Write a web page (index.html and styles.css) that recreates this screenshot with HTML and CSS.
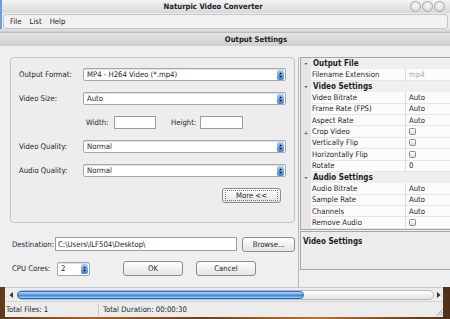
FILE: index.html
```html
<!DOCTYPE html>
<html>
<head>
<meta charset="utf-8">
<link rel="stylesheet" href="styles.css">
</head>
<body>
<div class="screen">
  <div class="top">
    <div class="titlebar">
      <div class="title">Naturpic Video Converter</div>
      <div class="wbtns"><i></i><i></i><i></i></div>
    </div>
    <div class="menubar">
      <div class="menubox"><span>File</span><span>List</span><span>Help</span></div>
    </div>
  </div>
  <div class="strip"></div>
  <div class="dlg-title">Output Settings</div>
  <div class="dlg">
    <div class="left">
      <div class="group">
        <div class="row"><label class="lbl">Output Format:</label><div class="select">MP4 - H264 Video (*.mp4)<svg class="spin" viewBox="0 0 7 10" width="7" height="10"><defs><linearGradient id="g" x1="0" y1="0" x2="0" y2="1"><stop offset="0" stop-color="#a9d2fb"/><stop offset="1" stop-color="#3b82d8"/></linearGradient></defs><rect x="0" y="0" width="7" height="10" rx="2" fill="url(#g)"/><path d="M2 4.3h3L3.5 2.3z M2 5.7h3L3.5 7.7z" fill="#111"/></svg></div></div>
        <div class="row"><label class="lbl">Video Size:</label><div class="select">Auto<svg class="spin" viewBox="0 0 7 10" width="7" height="10"><rect x="0" y="0" width="7" height="10" rx="2" fill="url(#g)"/><path d="M2 4.3h3L3.5 2.3z M2 5.7h3L3.5 7.7z" fill="#111"/></svg></div></div>
        <div class="row dims"><label class="dl">Width:</label><div class="input wbox"></div><label class="dl hl">Height:</label><div class="input hbox"></div></div>
        <div class="row"><label class="lbl">Video Quality:</label><div class="select">Normal<svg class="spin" viewBox="0 0 7 10" width="7" height="10"><rect x="0" y="0" width="7" height="10" rx="2" fill="url(#g)"/><path d="M2 4.3h3L3.5 2.3z M2 5.7h3L3.5 7.7z" fill="#111"/></svg></div></div>
        <div class="row"><label class="lbl">Audio Quality:</label><div class="select">Normal<svg class="spin" viewBox="0 0 7 10" width="7" height="10"><rect x="0" y="0" width="7" height="10" rx="2" fill="url(#g)"/><path d="M2 4.3h3L3.5 2.3z M2 5.7h3L3.5 7.7z" fill="#111"/></svg></div></div>
        <div class="btnrow"><div class="btn more"><span>More &lt;&lt;</span></div></div>
      </div>
      <div class="dest">
        <label class="dlbl">Destination:</label>
        <div class="input destbox">C:\Users\ILF504\Desktop\</div>
        <div class="btn browse">Browse...</div>
      </div>
      <div class="cpu">
        <label class="clbl">CPU Cores:</label>
        <div class="select cpusel">2<svg class="spin" viewBox="0 0 7 10" width="7" height="10"><rect x="0" y="0" width="7" height="10" rx="2" fill="url(#g)"/><path d="M2 4.3h3L3.5 2.3z M2 5.7h3L3.5 7.7z" fill="#111"/></svg></div>
        <div class="btn ok">OK</div>
        <div class="btn cancel">Cancel</div>
      </div>
    </div>
    <div class="right">
      <div class="pg">
        <div class="pr hd"><span class="pm">-</span><span class="ph">Output File</span></div>
        <div class="pr"><span class="pm"></span><span class="pl">Filename Extension</span><span class="pv dis">mp4</span></div>
        <div class="pr hd"><span class="pm">-</span><span class="ph">Video Settings</span></div>
        <div class="pr"><span class="pm"></span><span class="pl">Video Bitrate</span><span class="pv">Auto</span></div>
        <div class="pr"><span class="pm"></span><span class="pl">Frame Rate (FPS)</span><span class="pv">Auto</span></div>
        <div class="pr"><span class="pm"></span><span class="pl">Aspect Rate</span><span class="pv">Auto</span></div>
        <div class="pr"><span class="pm plus">+</span><span class="pl">Crop Video</span><span class="pv"><i class="cb"></i></span></div>
        <div class="pr"><span class="pm"></span><span class="pl">Vertically Flip</span><span class="pv"><i class="cb"></i></span></div>
        <div class="pr"><span class="pm"></span><span class="pl">Horizontally Flip</span><span class="pv"><i class="cb"></i></span></div>
        <div class="pr"><span class="pm"></span><span class="pl">Rotate</span><span class="pv">0</span></div>
        <div class="pr hd"><span class="pm">-</span><span class="ph">Audio Settings</span></div>
        <div class="pr"><span class="pm"></span><span class="pl">Audio Bitrate</span><span class="pv">Auto</span></div>
        <div class="pr"><span class="pm"></span><span class="pl">Sample Rate</span><span class="pv">Auto</span></div>
        <div class="pr"><span class="pm"></span><span class="pl">Channels</span><span class="pv">Auto</span></div>
        <div class="pr"><span class="pm"></span><span class="pl">Remove Audio</span><span class="pv"><i class="cb"></i></span></div>
      </div>
      <div class="desc">Video Settings</div>
    </div>
  </div>
  <div class="main-bottom">
    <div class="hscroll">
      <svg class="arr" viewBox="0 0 7 8" width="7" height="8"><path d="M5 1v6L1.5 4z" fill="#333"/></svg>
      <div class="track"><div class="thumb"></div></div>
      <svg class="arr" viewBox="0 0 7 8" width="7" height="8"><path d="M2 1v6L5.5 4z" fill="#333"/></svg>
    </div>
    <div class="status">
      <div class="cell1">Total Files: 1</div>
      <div class="cell2">Total Duration: 00:00:30</div>
      <svg class="grip" viewBox="0 0 8 8" width="8" height="8"><path d="M7.5 1.5L1.5 7.5M7.5 4L4 7.5M7.5 6.3L6.3 7.5" stroke="#9a9a9a" stroke-width="0.8" fill="none"/></svg>
    </div>
  </div>
</div>
</body>
</html>
```
FILE: styles.css
```css
* { box-sizing: border-box; margin: 0; padding: 0; }
html, body { width: 450px; height: 319px; overflow: hidden; }
body {
  font-family: "DejaVu Sans Condensed", "DejaVu Sans", sans-serif;
  font-size: 7.7px;
  color: #1e1e1e;
  background: linear-gradient(90deg, #5e3b1c 0%, #a8652b 20%, #6a4220 45%, #b87330 70%, #4e3118 100%);
}
.screen { display: flex; flex-direction: column; height: 317px; }

.top { border-left: 2px solid #6f9fd8; background: #ececec; }
.titlebar {
  height: 13px; display: flex; align-items: center;
  background: linear-gradient(#f4f4f4, #d8d8d8);
}
.title { flex: 1; text-align: center; font-weight: bold; padding-left: 14px; color: #222; }
.wbtns { display: flex; gap: 1px; margin-right: 5px; }
.wbtns i {
  width: 11px; height: 11px; border-radius: 50%;
  border: 1px solid #a8a8a8;
  background: radial-gradient(circle at 50% 35%, #fafafa, #d2d2d2);
}
.menubar { height: 16px; padding: 1px 2px 0 1px; }
.menubox {
  height: 15px; border: 1px solid #c6c6c6; border-radius: 3px;
  background: #f1f1f1; display: flex; align-items: center; padding-left: 6px; gap: 8px;
}
.strip { height: 3px; background: linear-gradient(#e2e2e2, #cfcfcf); }

.dlg-title {
  height: 14px; display: flex; align-items: center; justify-content: center;
  padding-left: 62px; font-weight: bold; color: #222;
  background: linear-gradient(#e4e4e4, #cdcdcd);
  border-top: 1px solid #bdbdbd;
}
.dlg {
  height: 241px; display: flex; padding-top: 11px; background: #efefef;
  overflow: hidden;
}
.left { width: 285px; margin-left: 10px; flex: none; }
.group {
  height: 166px; border: 1px solid #c3c3c3; border-radius: 4px;
  padding: 10px 8px 0 8px; background: #ededed;
}
.row { height: 13px; display: flex; align-items: center; margin-bottom: 11px; }
.lbl { width: 64px; flex: none; }
.select {
  flex: 1; height: 13px; display: flex; align-items: center; justify-content: space-between;
  background: #fff; border: 1px solid #a9a9a9; border-radius: 2px;
  padding: 0 1px 0 3px; box-shadow: inset 0 1px 0 #e0e0e0;
}
.spin { flex: none; }
.dims { padding-left: 67px; }
.dl { width: 28px; flex: none; }
.hl { width: 29px; margin-left: 15px; }
.input { background: #fff; border: 1px solid #9c9c9c; height: 13px; }
.wbox { width: 42px; }
.hbox { width: 43px; }
.btnrow { display: flex; justify-content: flex-end; margin-top: 9px; padding-right: 5px; }
.btn {
  height: 15px; border: 1px solid #8d8d8d; border-radius: 3px;
  background: linear-gradient(#fefefe, #e4e4e4);
  display: flex; align-items: center; justify-content: center;
}
.more { width: 59px; padding: 1px 2px; }
.more span {
  width: 100%; height: 100%; border: 1px dotted #777;
  display: flex; align-items: center; justify-content: center; line-height: 1;
}
.dest { display: flex; align-items: center; margin-top: 14px; padding-left: 2px; height: 14px; }
.dlbl { width: 43px; flex: none; }
.destbox { width: 183px; height: 14px; padding-left: 2px; display: flex; align-items: center; }
.browse { width: 53px; height: 15px; margin-left: 5px; }
.cpu { display: flex; align-items: center; margin-top: 10px; padding-left: 2px; height: 15px; }
.clbl { width: 45px; flex: none; }
.cpusel { flex: none; width: 33px; height: 14px; }
.ok { width: 60px; margin-left: 33px; }
.cancel { width: 60px; margin-left: 13px; }

.right { margin-left: 3px; width: 160px; flex: none; border-left: 1px solid #b9b9b9; padding-left: 1px; }
.pg { border: 1px solid #a6a6a6; border-right: none; background: #fff; }
.pr { display: flex; height: 11.4px; align-items: stretch; }
.pm {
  width: 10px; flex: none; background: #e6e6e6;
  display: flex; align-items: center; justify-content: center; font-weight: bold; color: #333;
}
.plus { font-weight: normal; font-size: 6px; }
.pl {
  width: 94px; flex: none; padding-left: 1px; display: flex; align-items: center;
  border-bottom: 1px solid #e6e6e6; background: #fbfbfb;
}
.pv {
  flex: 1; padding-left: 3px; display: flex; align-items: center;
  border-left: 1px solid #dcdcdc; border-bottom: 1px solid #e6e6e6; background: #fbfbfb;
}
.dis { color: #a9a9a9; }
.hd .ph {
  flex: 1; font-weight: bold; padding-left: 2px; display: flex; align-items: center;
  background: #efefef; font-size: 8px;
}
.cb {
  width: 7px; height: 7px; border: 1px solid #8a8a8a; border-radius: 1.5px;
  background: linear-gradient(#fff, #dcdcdc);
}
.desc {
  margin-top: 1px; height: 39px; border: 1px solid #a6a6a6; border-right: none;
  background: #ececec; font-weight: bold; padding: 5px 0 0 2px; font-size: 8px;
}

.main-bottom { margin: 0 7px 0 5px; background: #ececec; }
.hscroll {
  height: 14px; display: flex; align-items: center; padding: 0 1px 0 3px; gap: 1px;
  border-top: 1px solid #c9c9c9;
}
.arr { flex: none; }
.track {
  flex: 1; height: 10px; margin-left: 1px; border: 1px solid #b8b8b8; border-radius: 5px;
  background: linear-gradient(#ffffff, #e4e4e4);
}
.thumb {
  width: 287px; height: 100%; border-radius: 5px; margin-left: -1px;
  border: 1px solid #2d6ac4;
  background: linear-gradient(#b8dcfc, #5b9fe8 45%, #3d84dc 55%, #9ccaf6);
}
.status { height: 16px; display: flex; align-items: center; border-top: 1px solid #d4d4d4; }
.cell1 { width: 94px; padding-left: 1px; border-right: 1px solid #c8c8c8; height: 12px; display: flex; align-items: center; }
.cell2 { flex: 1; padding-left: 4px; }
.grip { margin-right: 0; align-self: flex-end; margin-bottom: 1px; }
```
